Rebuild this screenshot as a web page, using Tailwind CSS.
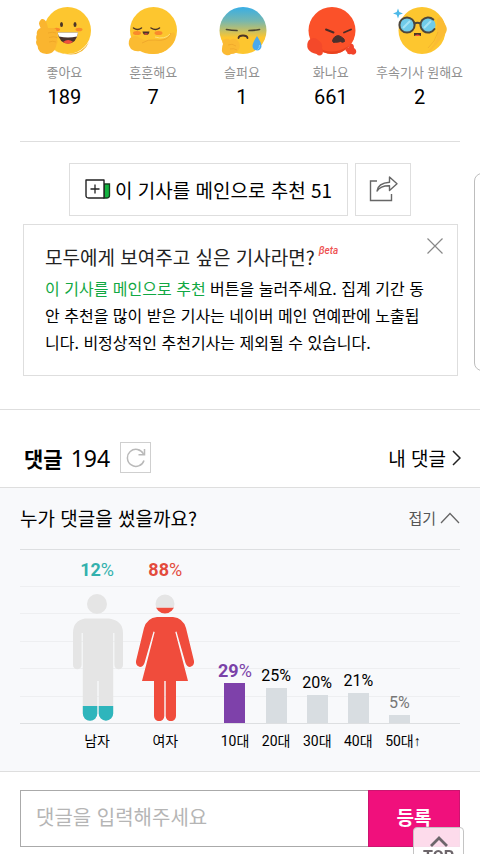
<!DOCTYPE html>
<html lang="ko">
<head>
  <meta charset="UTF-8" />
  <meta name="viewport" content="width=device-width, initial-scale=1.0" />
  <title>댓글</title>
  <script src="https://cdn.jsdelivr.net/npm/@tailwindcss/browser@4"></script>
</head>
<body class="bg-white text-black font-[Roboto,'Noto_Sans_CJK_KR',sans-serif] overflow-x-hidden">

  <!-- Reactions -->
  <ul class="grid grid-cols-5 pl-5 pr-4 pt-[3px] text-center">
    <li class="flex flex-col items-center">
      <svg class="size-14" viewBox="0 0 56 56" aria-hidden="true">
        <circle cx="31.5" cy="27.5" r="23.5" fill="#fdc62f" />
        <path d="M14 44q8 8 20 7q12-1 19-12q-5 12-18 12.500q-13 0-21-7.500z" fill="#f3b52b" />
        <ellipse cx="20.500" cy="26.500" rx="3.500" ry="1.800" fill="#f98b2b" />
        <ellipse cx="43" cy="26.500" rx="3.500" ry="1.800" fill="#f98b2b" />
        <ellipse cx="25.500" cy="21.500" rx="1.500" ry="2.600" fill="#4b3427" />
        <ellipse cx="39" cy="21.500" rx="1.500" ry="2.600" fill="#4b3427" />
        <path d="M21.500 29.500h20.500q-1.500 11-10 11q-8.500 0-10.500-11z" fill="#4a332b" />
        <path d="M21.500 29.500h20.500l-1 4q-9 2-18 0z" fill="#fff" />
        <path d="M27 39q5-4 10-.3q-2 2-5 2t-5-1.700z" fill="#f2503c" />
        <path d="M5 16.500c3-1.500 5 1 6 4.500l1 4h6q3 .5 2.500 3.500q2 1.500.6 4q1.600 2 0 4.200q1 2.300-.5 4.300c-1 6-4 10-10 10q-9-1-9-8q-2.500-3-1-6q-1-3 .3-5.500q-.8-3 1.700-5.500l2-1q-1-2-1.500-4t1.900-4.500z" fill="#fab52f" />
        <path d="M12 30q5-1.500 8 0M13 34.500q5-1.500 8 0M13 39q4-1.500 7 0" fill="none" stroke="#eda426" stroke-width=".8" />
      </svg>
      <span class="mt-1 text-[13px] leading-5 text-[#8f8f8f]">좋아요</span>
      <span class="mt-0.5 text-[20px] leading-6">189</span>
    </li>
    <li class="flex flex-col items-center">
      <svg class="size-14" viewBox="0 0 56 56" aria-hidden="true">
        <circle cx="28.500" cy="27.500" r="23.500" fill="#fdc62f" />
        <path d="M5 35q6-4 10 0q5 3 11 2q8 1 13-2q6-1 8-5q2-2 3 1q1 7-4 12q-7 8-18 8q-8 0-13-3q-5 1-9-2q-4-5-1-11z" fill="#fbbb31" />
        <path d="M17 40q6-4 13-3M30 37q13 2 16-7" fill="none" stroke="#f0a92c" stroke-width="1" />
        <path d="M30 34q10 3 15-3" fill="none" stroke="#ffe07a" stroke-width="1" />
        <ellipse cx="12" cy="30" rx="4" ry="2" fill="#f98a2c" />
        <ellipse cx="33.500" cy="30" rx="4" ry="2" fill="#f98a2c" />
        <path d="M8.500 25q4 3 8 0M26 25q4.500 3 8.500 0" fill="none" stroke="#4b3427" stroke-width="1.500" stroke-linecap="round" />
        <path d="M17.500 28.500h7q-.5 3.500-3.500 3.500t-3.500-3.500z" fill="#4b332b" />
        <path d="M19 30.800q2-1 4 0q-2 1.800-4 0z" fill="#f2503c" />
      </svg>
      <span class="mt-1 text-[13px] leading-5 text-[#8f8f8f]">훈훈해요</span>
      <span class="mt-0.5 text-[20px] leading-6">7</span>
    </li>
    <li class="flex flex-col items-center">
      <svg class="size-14" viewBox="0 0 56 56" aria-hidden="true">
        <defs>
          <linearGradient id="sad" x1="0" y1="0" x2="0" y2="1">
            <stop offset="0" stop-color="#38aee6" />
            <stop offset=".3" stop-color="#77b7ae" />
            <stop offset=".65" stop-color="#fdc62f" />
          </linearGradient>
        </defs>
        <circle cx="29" cy="27.500" r="23.500" fill="url(#sad)" />
        <path d="M9 41q-2-4 2-5q3-1 5 1q5-3 8 1q3 4 1 8q-2 5-8 5q-2 2-5 1q-5-2-4-6q0-3 1-5z" fill="#fbba33" />
        <path d="M14 42q4-2 8 1M16 46q4-1 7 1" fill="none" stroke="#efa72b" stroke-width=".8" />
        <path d="M12.500 26.500q5 1 10.500 1M35 27.500q5 0 10.500-1" fill="none" stroke="#4b4532" stroke-width="1.700" stroke-linecap="round" />
        <path d="M24.500 35q.5-2.500 4.500-2.500t4.500 2.500" fill="none" stroke="#4b3427" stroke-width="1.800" stroke-linecap="round" />
        <path d="M43 33q4.500 7 4.500 10a4.500 4.500 0 0 1-9 0q0-3 4.500-10z" fill="#4aa9ee" />
        <path d="M45.500 42q.3 3.500-2 4.500" fill="none" stroke="#86cbfa" stroke-width="1" />
      </svg>
      <span class="mt-1 text-[13px] leading-5 text-[#8f8f8f]">슬퍼요</span>
      <span class="mt-0.5 text-[20px] leading-6">1</span>
    </li>
    <li class="flex flex-col items-center">
      <svg class="size-14" viewBox="0 0 56 56" aria-hidden="true">
        <circle cx="29" cy="27.500" r="23.500" fill="#fb5129" />
        <path d="M14 44q14 9 30 0l3-2q-7 9-18 9q-9 0-15-7z" fill="#e9431f" />
        <path d="M6 37q5-4 9 0q5 3 4 8q2 3 .5 6q-3 3-6 0q-6-1-8.500-5q-2-5 1-9z" fill="#f4492a" />
        <path d="M47 41q4-1 4 4q3 2 2 5q-2 3-5 1q-4 1-4-2q-3-2 0-4q2 0 3-4z" fill="#f2432a" />
        <path d="M23 26.500l7.500 3M41 29.500l7-3" fill="none" stroke="#4a2b27" stroke-width="1.900" stroke-linecap="round" />
        <path d="M29.500 38q1-5 6-5.500q3 1 5.500 3.500l.5 2.500q-2 1.500-4 0l-3 .7q-3-.2-4 .3z" fill="#49302d" stroke="#49302d" stroke-width="1" stroke-linejoin="round" />
      </svg>
      <span class="mt-1 text-[13px] leading-5 text-[#8f8f8f]">화나요</span>
      <span class="mt-0.5 text-[20px] leading-6">661</span>
    </li>
    <li class="flex flex-col items-center">
      <svg class="size-14" viewBox="0 0 56 56" aria-hidden="true">
        <circle cx="30" cy="27.500" r="23.500" fill="#fdc62f" />
        <path d="M45 16q4-4 6 1l3 6q2 4-1 8l-9 11q-4 5-10 8q9-8 11-16z" fill="#fbbc34" />
        <path d="M46 29q-3 10-10 16" fill="none" stroke="#f0ae2f" stroke-width=".8" />
        <path d="M6 5.500l1.300 3.600 3.700 1.400-3.700 1.300-1.300 3.700-1.300-3.700-3.700-1.300 3.700-1.400z" fill="#4db9e8" />
        <circle cx="15" cy="22" r="7.600" fill="#70cbe9" stroke="#4c463c" stroke-width="2" />
        <circle cx="36" cy="22" r="7.600" fill="#70cbe9" />
        <path d="M42.500 26a7.600 7.600 0 1 1-1.200-9.500" fill="none" stroke="#4c463c" stroke-width="2" stroke-linecap="round" />
        <path d="M11 25l7-7M32 25l7-7" stroke="#a5e3f4" stroke-width="2" />
        <path d="M22.500 20.500q3-1.500 6 0" fill="none" stroke="#4c463c" stroke-width="2" />
        <path d="M22 30h7v3q-3.500-1.500-7 0z" fill="#4b3427" />
        <path d="M23.500 32q2-1 4 0v1h-4z" fill="#f2503c" />
      </svg>
      <span class="mt-1 text-[13px] leading-5 text-[#8f8f8f] whitespace-nowrap">후속기사 원해요</span>
      <span class="mt-0.5 text-[20px] leading-6">2</span>
    </li>
  </ul>

  <!-- Recommend -->
  <section class="mx-5 mt-8 border-t border-[#dedede] pt-[21px]">
    <div class="flex justify-center gap-[7px]">
      <button type="button" class="flex h-[53px] w-[279px] items-center justify-center gap-1 border border-[#dedede] text-[19px] leading-7 font-['Noto_Sans_CJK_KR',sans-serif] whitespace-nowrap">
        <svg class="h-6 w-[26px] shrink-0" viewBox="0 0 26 24" fill="none" aria-hidden="true">
          <path d="M19 6h5.500v11.500q0 2.500-3 2.500H19z" fill="#12b33f" stroke="#163f20" stroke-width="1.300" />
          <path d="M1 2h18v18H3.500Q1 20 1 17.500z" fill="#fff" stroke="#222" stroke-width="1.400" stroke-linejoin="round" />
          <path d="M10 6.500v9M5.500 11h9" stroke="#222" stroke-width="1.300" />
        </svg>
        이 기사를 메인으로 추천 51
      </button>
      <button type="button" aria-label="공유" class="flex h-[53px] w-14 items-center justify-center border border-[#dedede]">
        <svg class="h-7 w-[30px]" viewBox="0 0 30 28" fill="none" stroke="#666" stroke-width="1.400" aria-hidden="true">
          <path d="M9 5H2.500v19.500h21V18" />
          <path d="M9 15q1-8 12.500-8.800V1l7.500 6.800-7.500 6.700V9.700q-9-.2-12.500 5.300z" stroke-linejoin="round" />
        </svg>
      </button>
    </div>
  </section>

  <section class="relative ml-[23px] mr-[22px] mt-2 border border-[#dedede] bg-white px-[21px] pt-[18px] pb-[19px] font-['Noto_Sans_CJK_KR',sans-serif]">
    <div class="flex items-start gap-1">
      <h2 class="text-[19px] leading-7 text-[#222]">모두에게 보여주고 싶은 기사라면?</h2>
      <span class="text-[10px] leading-4 font-medium italic text-[#ee5252] font-[Roboto,sans-serif]">βeta</span>
    </div>
    <p class="mt-1 text-[16px] leading-[27px] whitespace-nowrap">
      <span class="text-[#11a843]">이 기사를 메인으로 추천</span> 버튼을 눌러주세요. 집계 기간 동<br />
      안 추천을 많이 받은 기사는 네이버 메인 연예판에 노출됩<br />
      니다. 비정상적인 추천기사는 제외될 수 있습니다.
    </p>
    <button type="button" aria-label="닫기" class="absolute right-3 top-[11px] p-0.5">
      <svg class="size-4" viewBox="0 0 16 16" stroke="#888" stroke-width="1.200" aria-hidden="true">
        <path d="M.5.5l15 15M15.500.5l-15 15" />
      </svg>
    </button>
  </section>

  <!-- Comments -->
  <section class="mt-[33px] border-t border-[#dedede]">
    <header class="flex h-[77px] items-center justify-between pl-6 pr-[19px] pt-[18px]">
      <div class="flex items-center gap-2">
        <h2 class="text-[21px] leading-8 font-bold font-['Noto_Sans_CJK_KR',sans-serif]">댓글</h2>
        <span class="text-[23px] leading-8 font-['Noto_Sans',sans-serif]">194</span>
        <button type="button" aria-label="새로고침" class="ml-0.5 flex size-[31px] items-center justify-center border border-[#cfcfcf]">
          <svg class="size-5" viewBox="0 0 20 20" fill="none" stroke="#b9b9b9" stroke-width="1.500" aria-hidden="true">
            <path d="M18 12.500A8.500 8.500 0 1 1 17.500 6" />
            <path d="M18.500 1v5.800h-6" />
          </svg>
        </button>
      </div>
      <a href="#" class="flex items-center gap-1.5 text-[19px] leading-7 font-['Noto_Sans_CJK_KR',sans-serif]">
        내 댓글
        <svg class="h-4 w-[9px]" viewBox="0 0 9 16" fill="none" stroke="#222" stroke-width="1.500" aria-hidden="true">
          <path d="M1 1l7 7-7 7" />
        </svg>
      </a>
    </header>

    <div class="border-y border-[#dedede] bg-[#f8f9fb] px-5">
      <div class="flex h-[61px] items-center justify-between pb-0.5 font-['Noto_Sans_CJK_KR',sans-serif]">
        <h3 class="text-[19px] leading-7">누가 댓글을 썼을까요?</h3>
        <button type="button" class="flex items-center gap-1 text-[15px] leading-6 text-[#555]">
          접기
          <svg class="h-3 w-5" viewBox="0 0 20 12" fill="none" stroke="#666" stroke-width="1.300" aria-hidden="true">
            <path d="M1 11l9-9.500 9 9.500" />
          </svg>
        </button>
      </div>

      <div class="relative h-[175px] border-y border-[#dddfe1]">
        <!-- grid lines -->
        <div class="absolute inset-0 flex flex-col" aria-hidden="true">
          <div class="h-[37px] border-b border-[#eeeff1]"></div>
          <div class="flex-1 border-b border-[#eeeff1]"></div>
          <div class="flex-1 border-b border-[#eeeff1]"></div>
          <div class="flex-1 border-b border-[#eeeff1]"></div>
          <div class="flex-1 border-b border-[#eeeff1]"></div>
          <div class="flex-1"></div>
        </div>
        <div class="relative grid h-full grid-cols-[68fr_68fr_15fr_repeat(5,41fr)] items-end pl-[43px] pr-10 text-center whitespace-nowrap">
          <div class="flex flex-col items-center text-[18px] leading-6 text-[#33b1ad]">
            <div><b>12</b>%</div>
            <svg class="mt-3 mb-0.5 h-[127px] w-[54px]" viewBox="0 0 54 127" aria-hidden="true">
              <defs>
                <clipPath id="man">
                  <circle cx="27" cy="10" r="10" />
                  <path d="M15 24.500h24q14 2 14 14.500v32a4.300 4.300 0 0 1-8.600 0V39h-1.200v80.500a6.800 6.800 0 0 1-14.500 0V87h-1.400v32.500a6.800 6.800 0 0 1-14.500 0V39h-1.200v32a4.300 4.300 0 0 1-8.600 0V39q0-12.500 12-14.500z" />
                </clipPath>
              </defs>
              <g clip-path="url(#man)">
                <path d="M0 0h54v127H0z" fill="#e5e5e5" />
                <path d="M0 112h54v15H0z" fill="#2eb5bc" />
              </g>
            </svg>
          </div>
          <div class="flex flex-col items-center text-[18px] leading-6 text-[#e34b3d]">
            <div><b>88</b>%</div>
            <svg class="mt-3 mb-0.5 h-[127px] w-[58px]" viewBox="0 0 58 127" aria-hidden="true">
              <defs>
                <clipPath id="woman">
                  <circle cx="29" cy="10" r="9.500" />
                  <path d="M21 23h16q10 1 13 11l8 33q.5 5-4 6q-3 0-4.500-4l-9-31.500-1.200.4L52 87H40v35a5 5 0 0 1-10.300 0V87h-1.400v35a5 5 0 0 1-10.300 0V87H6l12.700-49.100-1.200-.4L8.500 69q-1.500 4-4.500 4q-4.500-1-4-6l8-33q3-10 13-11z" />
                </clipPath>
              </defs>
              <g clip-path="url(#woman)">
                <path d="M0 13.500h58V127H0z" fill="#f04c3c" />
                <path d="M0 0h58v13.500H0z" fill="#e5e5e5" />
              </g>
            </svg>
          </div>
          <div></div>
          <div class="flex flex-col items-center text-[18px] leading-6 text-[#7a42a8]">
            <div><b>29</b>%</div>
            <div class="h-10 w-[21px] bg-[#7e41aa]"></div>
          </div>
          <div class="flex flex-col items-center text-[16px] leading-6">
            <div>25%</div>
            <div class="h-[35px] w-[21px] bg-[#d8dde1]"></div>
          </div>
          <div class="flex flex-col items-center text-[16px] leading-6">
            <div>20%</div>
            <div class="h-7 w-[21px] bg-[#d8dde1]"></div>
          </div>
          <div class="flex flex-col items-center text-[16px] leading-6">
            <div>21%</div>
            <div class="h-[30px] w-[21px] bg-[#d8dde1]"></div>
          </div>
          <div class="flex flex-col items-center text-[16px] leading-6 text-[#777]">
            <div>5%</div>
            <div class="h-2 w-[21px] bg-[#d8dde1]"></div>
          </div>
        </div>
      </div>

      <div class="grid h-[47px] grid-cols-[68fr_68fr_15fr_repeat(5,41fr)] pl-[43px] pr-10 pt-[7px] text-center text-[14px] leading-5 whitespace-nowrap">
        <div>남자</div>
        <div>여자</div>
        <div></div>
        <div>10대</div>
        <div>20대</div>
        <div>30대</div>
        <div>40대</div>
        <div>50대<span class="inline-block w-0 font-['Liberation_Sans',sans-serif]">↑</span></div>
      </div>
    </div>

    <form class="mx-5 mt-[18px] mb-2 flex h-[57px] font-['Noto_Sans_CJK_KR',sans-serif]">
      <input type="text" aria-label="댓글" placeholder="댓글을 입력해주세요" class="min-w-0 flex-1 border border-r-0 border-[#aaa] px-[15px] pb-1 text-[20px] outline-none placeholder:text-[#b5b5b5]" />
      <button type="submit" class="w-[92px] border border-[#cc1470] bg-[#f0107c] pb-0.5 text-[19px] font-bold text-white">등록</button>
    </form>
  </section>

  <!-- Side panel edge and page-top button -->
  <div class="fixed -right-4 top-[173px] h-[198px] w-[22px] rounded-lg border border-[#bdbdbd] bg-white"></div>
  <a href="#" class="fixed right-4 top-[827px] flex h-[50px] w-[51px] flex-col items-center rounded-sm border border-[#c4c4c4] bg-white/85 pt-2 text-[16px] leading-4 font-bold text-[#6d666b]">
    <svg class="h-[11px] w-[18px] shrink-0" viewBox="0 0 18 11" fill="none" stroke="#6d666b" stroke-width="2.800" aria-hidden="true">
      <path d="M1 10l8-8 8 8" />
    </svg>
    <span class="mt-0.5">TOP</span>
  </a>

</body>
</html>
